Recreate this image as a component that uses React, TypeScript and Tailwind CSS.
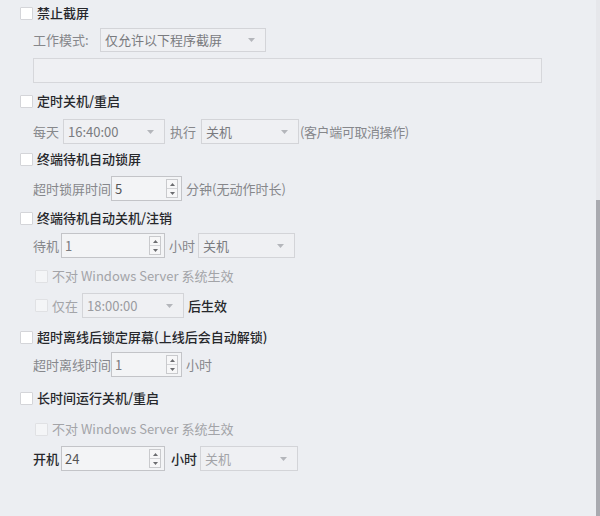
import React from "react";

const font = { fontFamily: '"Noto Sans CJK SC", "Noto Sans", sans-serif' };

function Check({ disabled = false, className = "" }: { disabled?: boolean; className?: string }) {
  return (
    <span
      className={
        "inline-block w-[13px] h-[13px] shrink-0 rounded-[1px] border " +
        (disabled ? "bg-[#f4f5f7] border-[#e0e1e4] " : "bg-white border-[#d4d5d9] ") +
        className
      }
    />
  );
}

function Arrow() {
  return (
    <svg width="7" height="4" viewBox="0 0 7 4" className="absolute right-[10px] top-1/2 -translate-y-1/2">
      <path d="M0 0 L7 0 L3.5 4 Z" fill="#b4b6bb" />
    </svg>
  );
}

function Select({ value, w, className = "", h = "h-[24px]" }: { value: string; w: string; className?: string; h?: string }) {
  return (
    <div
      className={
        "relative flex items-center border border-[#d3d4d8] bg-[#eff0f3] pl-[4px] text-[13px] text-[#7a7b7f] shrink-0 " +
        w + " " + h + " " + className
      }
    >
      {value}
      <Arrow />
    </div>
  );
}

function Spin({ value, w, className = "", dark = false }: { value: string; w: string; className?: string; dark?: boolean }) {
  return (
    <div
      className={
        "relative flex items-center border border-[#c3c4c8] bg-[#f3f4f6] pl-[3px] text-[13px] h-[25px] shrink-0 " +
        (dark ? "text-[#555] " : "text-[#7a7b7f] ") +
        w + " " + className
      }
    >
      {value}
      <div className="absolute right-[3px] top-[2px] bottom-[2px] w-[12px] flex flex-col border border-[#c9cacd] bg-[#f7f7f8]">
        <div className="flex-1 flex items-center justify-center border-b border-[#d3d4d7]">
          <svg width="5" height="3" viewBox="0 0 5 3"><path d="M0 3 L5 3 L2.5 0 Z" fill="#6b6c70" /></svg>
        </div>
        <div className="flex-1 flex items-center justify-center">
          <svg width="5" height="3" viewBox="0 0 5 3"><path d="M0 0 L5 0 L2.5 3 Z" fill="#6b6c70" /></svg>
        </div>
      </div>
    </div>
  );
}

function Head({ text, className = "" }: { text: string; className?: string }) {
  return (
    <div className={"flex items-center h-[26px] pl-[20px] " + className}>
      <Check />
      <span className="ml-[4px] text-[13px] text-[#26272b] font-medium">{text}</span>
    </div>
  );
}

export default function App() {
  return (
    <div className="w-[600px] h-[516px] bg-[#eceef2] flex overflow-hidden" style={font}>
      <div className="flex-1 flex flex-col">
        <Head text="禁止截屏" />
        <div className="flex items-center mt-[2px] pl-[33px] h-[24px]">
          <span className="w-[67px] text-[13px] text-[#86878b]">工作模式:</span>
          <Select value="仅允许以下程序截屏" w="w-[166px]" />
        </div>
        <div className="mt-[6px] ml-[33px] w-[509px] h-[25px] border border-[#d6d7db] bg-[#eff0f3]" />
        <Head text="定时关机/重启" className="mt-[5px]" />
        <div className="flex items-center mt-[5px] pl-[33px] h-[25px]">
          <span className="w-[30px] text-[13px] text-[#86878b]">每天</span>
          <Select value="16:40:00" w="w-[102px]" h="h-[25px]" />
          <span className="ml-[5px] w-[31px] text-[13px] text-[#86878b]">执行</span>
          <Select value="关机" w="w-[98px]" h="h-[25px]" />
          <span className="ml-[1px] text-[13px] tracking-[-0.4px] text-[#86878b]">(客户端可取消操作)</span>
        </div>
        <Head text="终端待机自动锁屏" className="mt-[2px]" />
        <div className="flex items-center mt-[4px] pl-[33px] h-[25px]">
          <span className="w-[78px] text-[13px] text-[#86878b]">超时锁屏时间</span>
          <Spin value="5" w="w-[71px]" dark />
          <span className="ml-[4px] text-[13px] text-[#86878b]">分钟(无动作时长)</span>
        </div>
        <Head text="终端待机自动关机/注销" className="mt-[4px]" />
        <div className="flex items-center mt-[2px] pl-[33px] h-[25px]">
          <span className="w-[28px] text-[13px] text-[#86878b]">待机</span>
          <Spin value="1" w="w-[104px]" />
          <span className="ml-[4px] w-[29px] text-[13px] text-[#86878b]">小时</span>
          <Select value="关机" w="w-[97px]" h="h-[25px]" />
        </div>
        <div className="flex items-center mt-[5px] pl-[35px] h-[26px]">
          <Check disabled />
          <span className="ml-[4px] text-[13px] text-[#a3a4a8]">不对 Windows Server 系统生效</span>
        </div>
        <div className="flex items-center mt-[4px] pl-[35px] h-[25px]">
          <Check disabled />
          <span className="ml-[4px] w-[30px] text-[13px] text-[#a3a4a8]">仅在</span>
          <Select value="18:00:00" w="w-[102px]" h="h-[25px]" className="!text-[#9a9ba0]" />
          <span className="ml-[4px] text-[13px] text-[#26272b] font-medium">后生效</span>
        </div>
        <Head text="超时离线后锁定屏幕(上线后会自动解锁)" className="mt-[6px]" />
        <div className="flex items-center mt-[2px] pl-[33px] h-[25px]">
          <span className="w-[78px] text-[13px] text-[#86878b]">超时离线时间</span>
          <Spin value="1" w="w-[71px]" />
          <span className="ml-[4px] text-[13px] text-[#86878b]">小时</span>
        </div>
        <Head text="长时间运行关机/重启" className="mt-[8px]" />
        <div className="flex items-center mt-[5px] pl-[35px] h-[26px]">
          <Check disabled />
          <span className="ml-[4px] text-[13px] text-[#a3a4a8]">不对 Windows Server 系统生效</span>
        </div>
        <div className="flex items-center mt-[4px] pl-[33px] h-[25px]">
          <span className="w-[28px] text-[13px] text-[#26272b] font-medium">开机</span>
          <Spin value="24" w="w-[104px]" dark />
          <span className="ml-[6px] w-[29px] text-[13px] text-[#26272b] font-medium">小时</span>
          <Select value="关机" w="w-[98px]" h="h-[25px]" className="!text-[#a3a4a8]" />
        </div>
      </div>
      <div className="w-[4px] flex flex-col bg-[#e6e7eb]">
        <div className="h-[200px]" />
        <div className="flex-1 bg-[#a9aab0]" />
      </div>
    </div>
  );
}
